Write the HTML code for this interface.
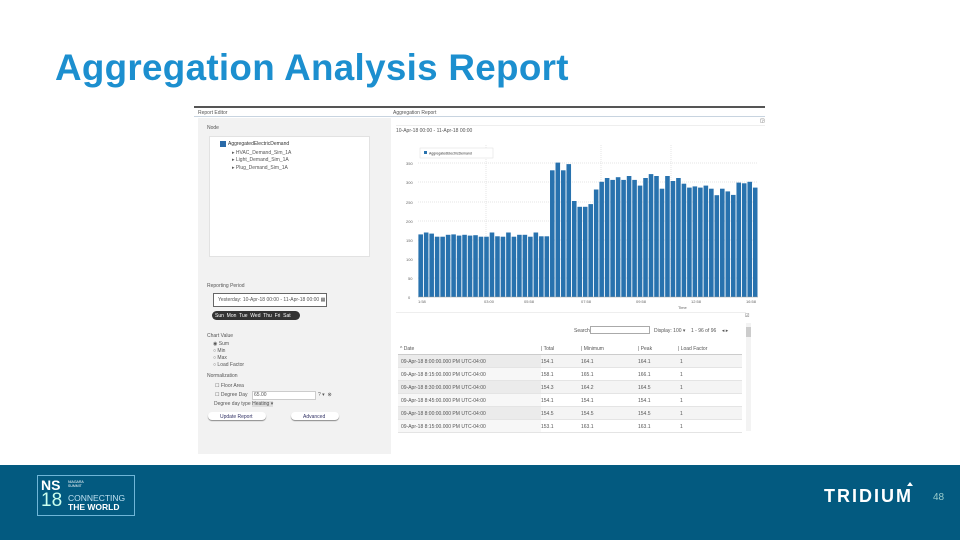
<!DOCTYPE html>
<html><head><meta charset="utf-8"><style>
body{margin:0;width:960px;height:540px;position:relative;background:#fff;font-family:"Liberation Sans",sans-serif;overflow:hidden}
.abs{position:absolute}
.t{font-size:5px;color:#555;white-space:nowrap}
</style></head><body>
<div class="abs" style="left:55px;top:47px;font-size:36.8px;font-weight:bold;color:#1c8fcf;letter-spacing:0.3px">Aggregation Analysis Report</div>

<!-- screenshot -->
<div class="abs" style="left:194px;top:104px;width:571px;height:352px;background:#fff"></div>
<div class="abs" style="left:194px;top:106px;width:571px;height:1.5px;background:#555"></div>
<div class="abs" style="left:194px;top:116px;width:571px;height:1px;background:#c8d4e0"></div>
<div class="abs t" style="left:198px;top:110px">Report Editor</div>
<div class="abs t" style="left:393px;top:110px">Aggregation Report</div>
<div class="abs" style="left:198px;top:118px;width:193px;height:336px;background:#f2f2f2"></div>
<div class="abs t" style="left:207px;top:125px">Node</div>
<div class="abs" style="left:209px;top:136px;width:159px;height:119px;background:#fff;border:1px solid #e2e2e2"></div>
<div class="abs" style="left:220px;top:141px;width:6px;height:6px;background:#2a6aa8"></div>
<div class="abs t" style="left:228px;top:141px;color:#333">AggregatedElectricDemand</div>
<div class="abs t" style="left:232px;top:150px">▸ HVAC_Demand_Sim_1A</div>
<div class="abs t" style="left:232px;top:157px">▸ Light_Demand_Sim_1A</div>
<div class="abs t" style="left:232px;top:165px">▸ Plug_Demand_Sim_1A</div>
<div class="abs t" style="left:207px;top:283px">Reporting Period</div>
<div class="abs" style="left:213px;top:293px;width:112px;height:12px;background:#fff;border:1px solid #666"></div>
<div class="abs t" style="left:218px;top:297px">Yesterday: 10-Apr-18 00:00 - 11-Apr-18 00:00 ▦</div>
<div class="abs" style="left:212px;top:311px;width:88px;height:9px;background:#333;border-radius:5px"></div>
<div class="abs t" style="left:215px;top:313px;color:#fff">Sun&nbsp; Mon&nbsp; Tue&nbsp; Wed&nbsp; Thu&nbsp; Fri&nbsp; Sat</div>
<div class="abs t" style="left:207px;top:333px">Chart Value</div>
<div class="abs t" style="left:213px;top:341px;line-height:7px">◉ Sum<br>○ Min<br>○ Max<br>○ Load Factor</div>
<div class="abs t" style="left:207px;top:373px">Normalization</div>
<div class="abs t" style="left:215px;top:383px">☐ Floor Area</div>
<div class="abs t" style="left:215px;top:392px">☐ Degree Day</div>
<div class="abs" style="left:252px;top:391px;width:62px;height:7px;background:#fff;border:1px solid #ccc"></div>
<div class="abs t" style="left:254px;top:392px">65.00</div>
<div class="abs t" style="left:318px;top:392px">? ▾ &nbsp;⊗</div>
<div class="abs t" style="left:214px;top:401px">Degree day type <span style="background:#ddd">Heating ▾</span></div>
<div class="abs" style="left:208px;top:412px;width:58px;height:8px;background:#fff;border-radius:5px;box-shadow:0 1px 1px #888"></div>
<div class="abs t" style="left:220px;top:414px;color:#336">Update Report</div>
<div class="abs" style="left:291px;top:412px;width:48px;height:8px;background:#fff;border-radius:5px;box-shadow:0 1px 1px #888"></div>
<div class="abs t" style="left:303px;top:414px;color:#336">Advanced</div>

<div class="abs" style="left:396px;top:125px;width:369px;height:1px;background:#eee"></div>
<div class="abs t" style="left:396px;top:128px">10-Apr-18 00:00 - 11-Apr-18 00:00</div>
<div class="abs t" style="left:760px;top:118px">◲</div>
<svg class="abs" style="left:396px;top:140px" width="364" height="170">
<g stroke="#ccc" stroke-dasharray="1,1" stroke-width="0.5">
<line x1="22" y1="23" x2="362" y2="23"/><line x1="22" y1="42" x2="362" y2="42"/><line x1="22" y1="62" x2="362" y2="62"/><line x1="22" y1="81" x2="362" y2="81"/><line x1="22" y1="100" x2="362" y2="100"/><line x1="22" y1="119" x2="362" y2="119"/><line x1="22" y1="138" x2="362" y2="138"/>
<line x1="90" y1="5" x2="90" y2="157"/><line x1="205" y1="5" x2="205" y2="157"/><line x1="275" y1="5" x2="275" y2="157"/>
</g>
<rect x="24" y="8" width="73" height="10" fill="#fff" stroke="#ddd" stroke-width="0.5"/>
<rect x="28" y="11" width="3" height="3" fill="#2872ae"/>
<text x="33" y="14.5" font-size="3.5" fill="#333">AggregatedElectricDemand</text>
<g font-size="4" fill="#666">
<text x="10" y="25">350</text><text x="10" y="44">300</text><text x="10" y="64">250</text><text x="10" y="83">200</text><text x="10" y="102">150</text><text x="10" y="121">100</text><text x="12" y="140">50</text><text x="12" y="159">0</text>
<text x="22" y="163">1:58</text><text x="88" y="163">03:00</text><text x="128" y="163">05:58</text><text x="185" y="163">07:58</text><text x="240" y="163">09:58</text><text x="295" y="163">12:58</text><text x="350" y="163">16:58</text><text x="282" y="169">Time</text>
</g>
<g id="bars" fill="#2872ae"></g>
<line x1="22" y1="157" x2="362" y2="157" stroke="#999" stroke-width="0.5"/>
</svg>
<div class="abs" style="left:396px;top:312px;width:350px;height:1px;background:#eee"></div>
<div class="abs t" style="left:745px;top:313px">☑</div>
<div class="abs t" style="left:574px;top:328px">Search</div>
<div class="abs" style="left:590px;top:326px;width:58px;height:6px;border:1px solid #aaa"></div>
<div class="abs t" style="left:654px;top:328px">Display: 100 ▾ &nbsp;&nbsp; 1 - 96 of 96 &nbsp;&nbsp; ◂ ▸</div>
<div class="abs" style="left:746px;top:323px;width:5px;height:108px;background:#f3f3f3"></div>
<div class="abs" style="left:746px;top:327px;width:5px;height:10px;background:#ccc"></div>
<div class="abs t" style="left:400px;top:346px">^ Date</div>
<div class="abs t" style="left:541px;top:346px">| Total</div>
<div class="abs t" style="left:581px;top:346px">| Minimum</div>
<div class="abs t" style="left:638px;top:346px">| Peak</div>
<div class="abs t" style="left:678px;top:346px">| Load Factor</div>
<div class="abs" style="left:398px;top:354px;width:344px;height:1px;background:#ccc"></div>
<div id="rows"></div>

<!-- footer -->
<div class="abs" style="left:0;top:465px;width:960px;height:75px;background:#035a80"></div>
<div class="abs" style="left:37px;top:475px;width:98px;height:41px;border:1px solid #6fb6d8;box-sizing:border-box"></div>
<div class="abs" style="left:41px;top:477px;color:#fff;font-weight:bold;font-size:14px">NS</div>
<div class="abs" style="left:41px;top:490px;color:#cfe;font-size:19px;font-weight:300">18</div>
<div class="abs" style="left:68px;top:480px;color:#fff;font-size:3.5px;line-height:4px">NIAGARA<br>SUMMIT</div>
<div class="abs" style="left:68px;top:493px;color:#bfe0f0;font-size:8.5px">CONNECTING</div>
<div class="abs" style="left:68px;top:502px;color:#fff;font-size:8.5px;font-weight:bold">THE WORLD</div>
<div class="abs" style="left:824px;top:486px;color:#fff;font-size:18px;font-weight:bold;letter-spacing:2px">TRIDIUM</div>
<div class="abs" style="left:907px;top:482px;width:0;height:0;border-left:3px solid transparent;border-right:3px solid transparent;border-bottom:4px solid #fff"></div>
<div class="abs" style="left:933px;top:492px;color:#9cc;font-size:10px">48</div>
<script>
var v=[163,168,165,157,157,162,163,160,162,160,161,157,157,168,158,157,168,157,162,162,157,168,158,158,330,350,330,346,250,235,235,242,280,300,310,305,312,305,315,305,290,310,320,315,282,315,302,310,295,285,288,285,290,282,265,282,275,266,298,296,300,285];
var g=document.getElementById('bars'),w=340/v.length,s='';
v.forEach(function(x,i){var h=x/50*19.2;s+='<rect x="'+(22+i*w+0.4).toFixed(2)+'" y="'+(157-h).toFixed(1)+'" width="'+(w-0.9).toFixed(2)+'" height="'+h.toFixed(1)+'"/>';});
g.innerHTML=s;
var d=[[154.1,164.1,164.1],[158.1,165.1,166.1],[154.3,164.2,164.5],[154.1,154.1,154.1],[154.5,154.5,154.5],[153.1,163.1,163.1]],r='';
d.forEach(function(a,i){var y=355+i*13;r+='<div class="abs" style="left:398px;top:'+y+'px;width:344px;height:12px;background:'+(i%2?'#fff':'#f4f4f4')+';border-bottom:1px solid #e4e4e4"></div><div class="abs" style="left:398px;top:'+y+'px;width:143px;height:12px;background:'+(i%2?'#f7f7f7':'#ebebeb')+'"></div><div class="abs t" style="left:401px;top:'+(y+4)+'px">09-Apr-18 8:'+['00','15','30','45','00','15'][i]+':00.000 PM UTC-04:00</div><div class="abs t" style="left:541px;top:'+(y+4)+'px">'+a[0]+'</div><div class="abs t" style="left:581px;top:'+(y+4)+'px">'+a[1]+'</div><div class="abs t" style="left:638px;top:'+(y+4)+'px">'+a[2]+'</div><div class="abs t" style="left:680px;top:'+(y+4)+'px">1</div>';});
document.getElementById('rows').innerHTML=r;
</script>
</body></html>
